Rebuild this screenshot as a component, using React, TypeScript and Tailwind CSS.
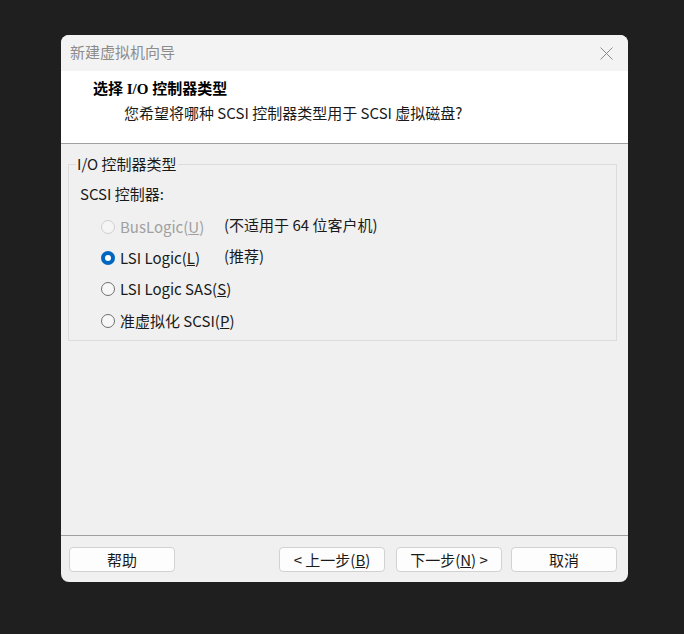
import React from "react";

const ui = { fontFamily: '"Noto Sans CJK SC", "Noto Sans", sans-serif' };
const serif = { fontFamily: '"Liberation Serif", "Noto Sans CJK SC", serif' };

interface Option {
  label: string;
  key: string;
  note?: string;
  checked?: boolean;
  disabled?: boolean;
}

const options: Option[] = [
  { label: "BusLogic(", key: "U", note: "(不适用于 64 位客户机)", disabled: true },
  { label: "LSI Logic(", key: "L", note: "(推荐)", checked: true },
  { label: "LSI Logic SAS(", key: "S" },
  { label: "准虚拟化 SCSI(", key: "P" },
];

function Radio({ checked, disabled }: { checked?: boolean; disabled?: boolean }) {
  if (checked) {
    return (
      <span className="w-[14px] h-[14px] rounded-full bg-[#0067c0] flex items-center justify-center shrink-0">
        <span className="w-[6px] h-[6px] rounded-full bg-white" />
      </span>
    );
  }
  return (
    <span
      className={
        disabled
          ? "w-[14px] h-[14px] rounded-full border border-[#cfcfcf] bg-[#f5f5f5] shrink-0"
          : "w-[14px] h-[14px] rounded-full border border-[#707070] bg-[#f7f7f7] shrink-0"
      }
    />
  );
}

function Button({ children }: { children: React.ReactNode }) {
  return (
    <button className="w-[106px] h-[25px] rounded-[4px] border border-[#d2d2d2] bg-[#fdfdfd] text-[15px] leading-[20px] text-[#1a1a1a] flex items-center justify-center whitespace-nowrap">
      {children}
    </button>
  );
}

export default function App() {
  return (
    <div className="w-[684px] h-[634px] bg-[#1f1f1f] pt-[35px] pl-[61px]" style={ui}>
      <div className="w-[567px] h-[547px] rounded-[8px] bg-[#f0f0f0] flex flex-col overflow-hidden">
        {/* title bar */}
        <div className="h-[36px] bg-[#f3f3f3] flex items-center justify-between pl-[9px] pr-[16px] pb-[3px] shrink-0">
          <span className="text-[15px] leading-[20px] text-[#8c8c8c]">新建虚拟机向导</span>
          <svg width="13" height="13" viewBox="0 0 13 13" className="mt-[3px] -mr-[1px]">
            <path d="M0.5 0.5 L12.5 12.5 M12.5 0.5 L0.5 12.5" stroke="#8a8a8a" strokeWidth="1" />
          </svg>
        </div>

        {/* header */}
        <div className="h-[73px] bg-white border-b border-[#a0a0a0] shrink-0 pl-[32px] pt-[8px]">
          <div className="text-[15px] font-bold text-black leading-[20px]" style={serif}>
            选择 I/O 控制器类型
          </div>
          <div className="text-[15px] text-[#1a1a1a] leading-[20px] pl-[31px] mt-[4px]">
            您希望将哪种 SCSI 控制器类型用于 SCSI 虚拟磁盘?
          </div>
        </div>

        {/* body */}
        <div className="flex-1 pt-[20px] pl-[7px] pr-[11px]">
          <div className="relative border border-[#dcdcdc] h-[177px] pl-[11px] pt-[19px]">
            <span className="absolute -top-[11px] left-[7px] bg-[#f0f0f0] px-[1px] text-[15px] leading-[20px] text-[#1a1a1a]">
              I/O 控制器类型
            </span>
            <div className="text-[15px] leading-[20px] text-[#1a1a1a]">SCSI 控制器:</div>
            <div className="mt-[7px] flex flex-col">
              {options.map((o) => (
                <div key={o.key} className="h-[31.3px] flex items-center pl-[21px] text-[15px] leading-[20px] whitespace-nowrap">
                  <div className="w-[123px] shrink-0 flex items-center gap-[5px]">
                    <Radio checked={o.checked} disabled={o.disabled} />
                    <span className={o.disabled ? "text-[#a0a0a0]" : "text-[#1a1a1a]"}>
                      {o.label}
                      <span className="underline">{o.key}</span>)
                    </span>
                  </div>
                  {o.note && <span className="text-[#1a1a1a] -mt-[4px]">{o.note}</span>}
                </div>
              ))}
            </div>
          </div>
        </div>

        {/* footer */}
        <div className="h-[47px] border-t border-[#a0a0a0] shrink-0 flex items-start pt-[11px] pl-[8px] pr-[11px]">
          <Button>帮助</Button>
          <div className="flex-1" />
          <div className="flex">
            <Button>
              &lt; 上一步(<span className="underline">B</span>)
            </Button>
            <div className="w-[11px]" />
            <Button>
              下一步(<span className="underline">N</span>) &gt;
            </Button>
            <div className="w-[9px]" />
            <Button>取消</Button>
          </div>
        </div>
      </div>
    </div>
  );
}
